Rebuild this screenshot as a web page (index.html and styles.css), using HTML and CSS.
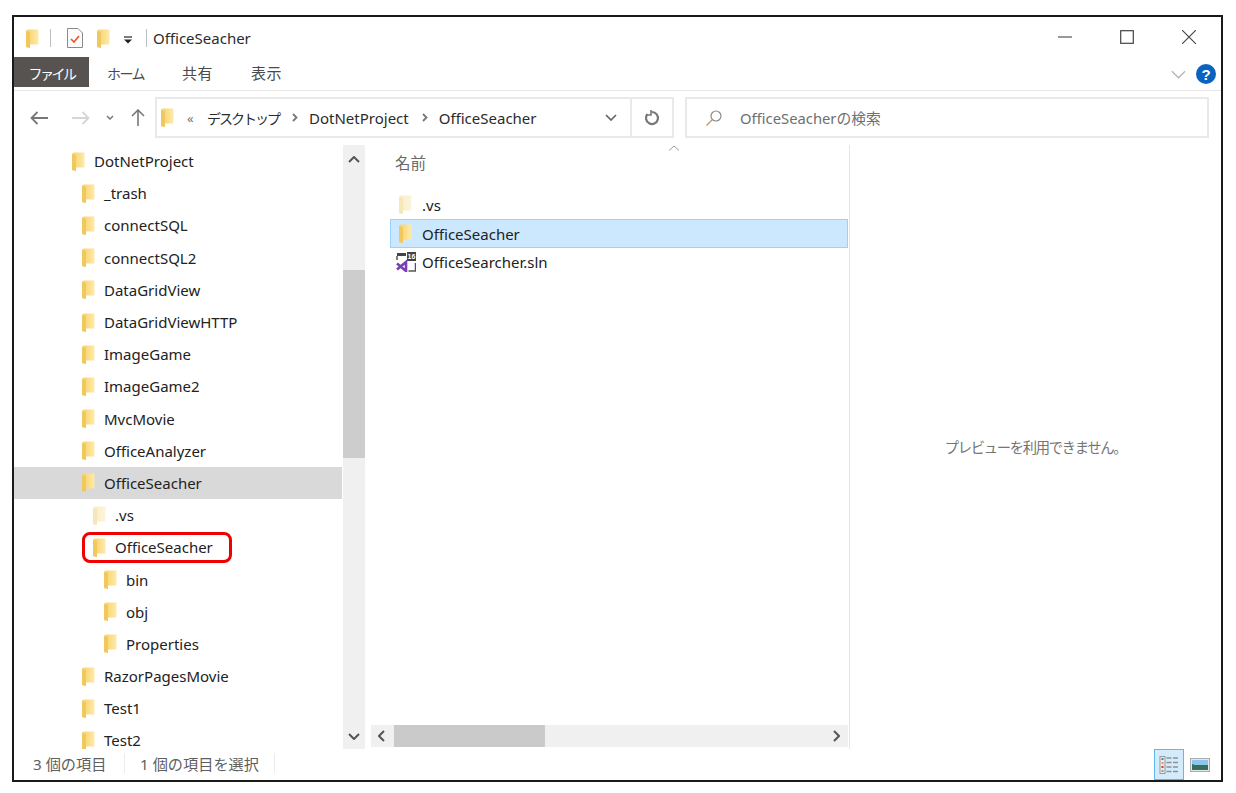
FILE: index.html
```html
<!DOCTYPE html>
<html lang="ja">
<head>
<meta charset="utf-8">
<title>OfficeSeacher</title>
<link rel="stylesheet" href="styles.css">
</head>
<body>
<svg class="defs" width="0" height="0" aria-hidden="true">
  <defs>
    <linearGradient id="fg" x1="0" x2="1" y1="0" y2="0"><stop offset="0" stop-color="#f6d06c"/><stop offset="0.45" stop-color="#fbdc82"/><stop offset="1" stop-color="#fdeaae"/></linearGradient>
    <linearGradient id="fl" x1="0" x2="1" y1="0" y2="0"><stop offset="0" stop-color="#f8ecc6"/><stop offset="1" stop-color="#fdf5da"/></linearGradient>
    <symbol id="folder" viewBox="0 0 13 19"><path d="M0 2 L1.5 .5 H12.5 V15.5 H4 V19 L0 18 Z" fill="url(#fg)"/><path d="M0 2 L4 3.2 V19 L0 18 Z" fill="#f0c85e"/></symbol>
    <symbol id="folder-light" viewBox="0 0 13 19"><path d="M0 2 L1.5 .5 H12.5 V15.5 H4 V19 L0 18 Z" fill="url(#fl)"/><path d="M0 2 L4 3.2 V19 L0 18 Z" fill="#f6e7ba"/></symbol>
  </defs>
</svg>
<div class="window">
  <header class="titlebar">
    <svg class="ficon"><use href="#folder"/></svg>
    <span class="tsep first"></span>
    <svg class="check" viewBox="0 0 16 20" width="16" height="20"><path d="M.5 .5H11L15.5 5V19.5H.5Z" fill="#fbfbfb" stroke="#8a8a8a"/><path d="M4 11l3 3 5-6" fill="none" stroke="#e8562a" stroke-width="1.6"/></svg>
    <svg class="ficon qa"><use href="#folder"/></svg>
    <svg class="qadrop" viewBox="0 0 9 8" width="9" height="8"><path d="M0 1h8" stroke="#222" stroke-width="1.2"/><path d="M0 3.5h8L4 7.5Z" fill="#222"/></svg>
    <span class="tsep second"></span>
    <span class="title">OfficeSeacher</span>
    <div class="winbtns">
      <svg viewBox="0 0 14 14" width="14" height="14" class="wb"><path d="M0 7h14" stroke="#555" stroke-width="1.2"/></svg>
      <svg viewBox="0 0 14 14" width="14" height="14" class="wb"><rect x=".7" y=".7" width="12.600" height="12.600" fill="none" stroke="#444" stroke-width="1.200"/></svg>
      <svg viewBox="0 0 14 14" width="14" height="14" class="wb"><path d="M0 0l14 14M14 0L0 14" stroke="#444" stroke-width="1.100"/></svg>
    </div>
  </header>
  <nav class="ribbon">
    <span class="tab active">ファイル</span>
    <span class="tab home">ホーム</span>
    <span class="tab share">共有</span>
    <span class="tab view">表示</span>
    <span class="ribbon-right">
      <svg viewBox="0 0 16 9" width="15" height="9"><path d="M1 1l7 7 7-7" fill="none" stroke="#b5b5b5" stroke-width="1.400"/></svg>
      <span class="help">?</span>
    </span>
  </nav>
  <div class="addressrow">
    <div class="navbtns">
      <svg viewBox="0 0 18 14" width="18" height="14"><path d="M1 7h17M7.500 1L1.500 7l6 6" fill="none" stroke="#777" stroke-width="1.800"/></svg>
      <svg class="fwd" viewBox="0 0 18 14" width="18" height="14"><path d="M0 7h17M10.500 1l6 6-6 6" fill="none" stroke="#d6d6d6" stroke-width="1.800"/></svg>
      <svg class="hist" viewBox="0 0 8 5" width="8" height="5"><path d="M1 1l3 3 3-3" fill="none" stroke="#777" stroke-width="1.500"/></svg>
      <svg class="up" viewBox="0 0 14 17" width="14" height="17"><path d="M7 17V1M1 7l6-6 6 6" fill="none" stroke="#777" stroke-width="1.600"/></svg>
    </div>
    <div class="addrbox">
      <svg class="ficon"><use href="#folder"/></svg>
      <span class="more">«</span>
      <span class="crumb jp">デスクトップ</span>
      <svg class="cchev" viewBox="0 0 6 9" width="6" height="9"><path d="M1 1l3.500 3.500L1 8" fill="none" stroke="#777" stroke-width="1.800"/></svg>
      <span class="crumb">DotNetProject</span>
      <svg class="cchev" viewBox="0 0 6 9" width="6" height="9"><path d="M1 1l3.500 3.500L1 8" fill="none" stroke="#777" stroke-width="1.800"/></svg>
      <span class="crumb">OfficeSeacher</span>
      <svg class="addrdrop" viewBox="0 0 12 7" width="12" height="7"><path d="M1 1l5 5 5-5" fill="none" stroke="#666" stroke-width="1.700"/></svg>
      <span class="refresh">
        <svg viewBox="0 0 16 16" width="16" height="16"><path d="M3.500 4A6 6 0 1 0 8 2" fill="none" stroke="#777" stroke-width="2.200"/><path d="M7 0v5H2.500" fill="none" stroke="#777" stroke-width="1.600"/></svg>
      </span>
    </div>
    <div class="searchbox">
      <svg viewBox="0 0 18 18" width="18" height="18"><circle cx="11" cy="7" r="5" fill="none" stroke="#8b8b8b" stroke-width="1.200"/><path d="M7.500 10.500L1.500 16.500" stroke="#c39a6b" stroke-width="1.500"/></svg>
      <span>OfficeSeacherの検索</span>
    </div>
  </div>
  <main class="content">
    <aside class="tree">
      <ul class="treelist">
        <li class="row l1"><svg class="ficon"><use href="#folder"/></svg>DotNetProject</li>
        <li class="row l2"><svg class="ficon"><use href="#folder"/></svg>_trash</li>
        <li class="row l2"><svg class="ficon"><use href="#folder"/></svg>connectSQL</li>
        <li class="row l2"><svg class="ficon"><use href="#folder"/></svg>connectSQL2</li>
        <li class="row l2"><svg class="ficon"><use href="#folder"/></svg>DataGridView</li>
        <li class="row l2"><svg class="ficon"><use href="#folder"/></svg>DataGridViewHTTP</li>
        <li class="row l2"><svg class="ficon"><use href="#folder"/></svg>ImageGame</li>
        <li class="row l2"><svg class="ficon"><use href="#folder"/></svg>ImageGame2</li>
        <li class="row l2"><svg class="ficon"><use href="#folder"/></svg>MvcMovie</li>
        <li class="row l2"><svg class="ficon"><use href="#folder"/></svg>OfficeAnalyzer</li>
        <li class="row l2 current"><svg class="ficon"><use href="#folder"/></svg>OfficeSeacher</li>
        <li class="row l3"><svg class="ficon"><use href="#folder-light"/></svg>.vs</li>
        <li class="row l3 marked"><svg class="ficon"><use href="#folder"/></svg>OfficeSeacher<span class="redmark"></span></li>
        <li class="row l4"><svg class="ficon"><use href="#folder"/></svg>bin</li>
        <li class="row l4"><svg class="ficon"><use href="#folder"/></svg>obj</li>
        <li class="row l4"><svg class="ficon"><use href="#folder"/></svg>Properties</li>
        <li class="row l2"><svg class="ficon"><use href="#folder"/></svg>RazorPagesMovie</li>
        <li class="row l2"><svg class="ficon"><use href="#folder"/></svg>Test1</li>
        <li class="row l2"><svg class="ficon"><use href="#folder"/></svg>Test2</li>
      </ul>
    </aside>
    <div class="vscroll">
      <svg viewBox="0 0 12 7" width="12" height="7"><path d="M1 6l5-5 5 5" fill="none" stroke="#555" stroke-width="2"/></svg>
      <span class="vthumb"></span>
      <svg viewBox="0 0 12 7" width="12" height="7"><path d="M1 1l5 5 5-5" fill="none" stroke="#555" stroke-width="2"/></svg>
    </div>
    <section class="list">
      <div class="listbody">
        <svg class="sortcaret" viewBox="0 0 12 6" width="12" height="6"><path d="M1 5.500L6 1l5 4.500" fill="none" stroke="#9a9a9a"/></svg>
        <div class="colhead">名前</div>
        <div class="file"><svg class="ficon"><use href="#folder-light"/></svg>.vs</div>
        <div class="file selected"><svg class="ficon"><use href="#folder"/></svg>OfficeSeacher</div>
        <div class="file sln">
          <svg class="slnicon" viewBox="0 0 20 20" width="20" height="20">
            <path d="M1 1h9v3H1z" fill="#444"/>
            <rect x="11" y="0" width="9" height="9" fill="#444"/>
            <path d="M1 4v4M19.500 11v8h-7" fill="none" stroke="#555" stroke-width="1.500"/>
            <text class="slnnum" x="15.500" y="7.300" text-anchor="middle">16</text>
            <path d="M1 11.500l9 7.500V10L1 17.500" fill="none" stroke="#7b3fb5" stroke-width="2.600"/>
          </svg>OfficeSearcher.sln
        </div>
      </div>
      <div class="hscroll">
        <svg viewBox="0 0 7 12" width="7" height="12"><path d="M6 1L1 6l5 5" fill="none" stroke="#555" stroke-width="2"/></svg>
        <span class="hthumb"></span>
        <svg class="hright" viewBox="0 0 7 12" width="7" height="12"><path d="M1 1l5 5-5 5" fill="none" stroke="#555" stroke-width="2"/></svg>
      </div>
    </section>
    <section class="preview">プレビューを利用できません。</section>
  </main>
  <footer class="status">
    <span class="count">3 個の項目</span>
    <span class="ssep a"></span>
    <span class="selcount">1 個の項目を選択</span>
    <span class="ssep"></span>
    <span class="viewbtns">
      <span class="vbtn on">
        <svg viewBox="0 0 20 20" width="20" height="20">
          <rect x="1" y="1.500" width="5" height="17" fill="#ececec" stroke="#999"/>
          <path d="M2.500 4h2" stroke="#4a7fc0" stroke-width="2"/><path d="M2.500 8h2" stroke="#d9a441" stroke-width="2"/><path d="M2.500 12h2" stroke="#e03030" stroke-width="2"/><path d="M2.500 16h2" stroke="#999" stroke-width="2"/>
          <path d="M7.500 3h5M14 3h5M7.500 7.500h5M14 7.500h5M7.500 12h5M14 12h5M7.500 16.500h5M14 16.500h5" stroke="#8c9298" stroke-width="1.300"/>
        </svg>
      </span>
      <svg class="imgicon" viewBox="0 0 20 14" width="20" height="14">
        <rect x=".5" y=".5" width="19" height="13" fill="#e8e8e8" stroke="#aaa"/>
        <rect x="2" y="2" width="16" height="5" fill="#8cc6ee"/>
        <rect x="2" y="7" width="16" height="5" fill="#2f6b52"/>
        <path d="M2 6l6 2 5-1 5 1v4H2Z" fill="#356f5a"/>
      </svg>
    </span>
  </footer>
</div>
</body>
</html>
```

FILE: styles.css
```css
* { box-sizing: border-box; }
html, body { margin: 0; padding: 0; background: #fff; }
body {
  width: 1236px;
  height: 793px;
  overflow: hidden;
  padding: 15px 0 0 12px;
  font-family: "Noto Sans", "Noto Sans CJK JP", sans-serif;
  font-size: 15px;
  color: #222;
}
.defs { position: absolute; }
.window {
  width: 1211px;
  height: 767px;
  border: 2px solid #1a1a1a;
  background: #fff;
  display: flex;
  flex-direction: column;
  overflow: hidden;
}
.ficon { width: 13px; height: 19px; flex: none; }

.titlebar { height: 40px; flex: none; display: flex; align-items: center; padding: 2px 0 0 12px; }
.tsep { width: 1px; height: 18px; background: #bdbdbd; flex: none; }
.tsep.first { margin-left: 11px; }
.check { margin-left: 16px; flex: none; }
.qa { margin-left: 14px; }
.qadrop { margin-left: 14px; margin-top: 3px; flex: none; }
.tsep.second { margin-left: 13px; }
.title { margin-left: 6px; font-size: 15px; color: #2b2b2b; }
.winbtns { margin-left: auto; display: flex; align-items: center; gap: 48px; padding-right: 25px; margin-top: -2px; }

.ribbon { height: 34px; flex: none; display: flex; align-items: flex-start; border-bottom: 1.500px solid #e6e6e6; }
.tab { font-size: 15px; height: 30px; line-height: 33px; color: #4a4a4a; white-space: nowrap; }
.tab.active { width: 75px; background: #575350; color: #fff; text-align: center; font-size: 14px; letter-spacing: -2.500px; }
.tab.home { margin-left: 18px; font-size: 14px; letter-spacing: -1.500px; }
.tab.share { margin-left: 38px; letter-spacing: .5px; }
.tab.view { margin-left: 38px; letter-spacing: .5px; }
.ribbon-right { margin-left: auto; display: flex; align-items: center; gap: 10px; height: 34px; padding-right: 5px; }
.help {
  width: 20px; height: 20px; border-radius: 50%;
  background: #0b63c0; color: #fff; font-weight: 700; font-size: 15px;
  display: flex; align-items: center; justify-content: center;
  font-family: "Liberation Sans", sans-serif;
}

.addressrow { height: 54px; flex: none; display: flex; padding-top: 6px; }
.navbtns { width: 141px; height: 41px; flex: none; display: flex; align-items: center; padding-left: 16px; }
.fwd { margin-left: 24px; }
.hist { margin-left: 16px; }
.up { margin-left: 17px; }
.addrbox {
  width: 519px; height: 41px; flex: none;
  border: 2px solid #e9e9e9;
  display: flex; align-items: center; padding-left: 4px;
}
.more { margin-left: 13px; color: #777; font-size: 13px; width: 20px; }
.crumb { color: #2b2b2b; font-size: 15px; }
.crumb.jp { font-size: 14px; letter-spacing: -2px; white-space: nowrap; }
.cchev { margin: 0 11px 0 13px; flex: none; }
.addrdrop { margin-left: auto; margin-right: 13px; flex: none; }
.refresh {
  width: 42px; height: 37px; border-left: 2px solid #e9e9e9; flex: none;
  display: flex; align-items: center; justify-content: center;
}
.searchbox {
  margin-left: 11px; width: 524px; height: 41px; flex: none;
  border: 2px solid #e9e9e9;
  display: flex; align-items: center; gap: 17px; padding-left: 18px;
  color: #6f6f6f; font-size: 14.800px;
}

.content { flex: 1; min-height: 0; display: flex; }
.tree { width: 328px; flex: none; overflow: hidden; }
.treelist { list-style: none; margin: 0; padding: 0; }
.row { height: 32.200px; display: flex; align-items: center; white-space: nowrap; position: relative; color: #222; }
.row .ficon { margin-right: 9px; }
.l1 { padding-left: 58px; }
.l2 { padding-left: 68px; }
.l3 { padding-left: 79px; }
.l4 { padding-left: 90px; }
.current { background: #d9d9d9; }
.redmark {
  position: absolute; left: 68px; top: 1px; width: 150px; height: 31px;
  border: 3px solid #f00000; border-radius: 8px;
}
.vscroll {
  width: 22px; margin-left: 1px; flex: none; background: #f0f0f0;
  display: flex; flex-direction: column; align-items: center; position: relative;
  padding: 11px 0 9px;
}
.vscroll svg { flex: none; }
.vthumb { width: 100%; height: 188px; background: #cdcdcd; margin-top: 107px; margin-bottom: auto; }
.list {
  width: 479px; margin-left: 6px; flex: none;
  border-right: 1px solid #e5e5e5;
  display: flex; flex-direction: column;
  padding-bottom: 2px;
}
.listbody { flex: 1; min-height: 0; position: relative; padding-left: 19px; }
.sortcaret { position: absolute; left: 297px; top: 0; }
.colhead { height: 45px; padding: 6px 0 0 5px; color: #6a6a6a; font-size: 15.500px; line-height: 24px; }
.file { height: 29px; display: flex; align-items: center; white-space: nowrap; padding-left: 8px; border: 1px solid transparent; color: #222; margin-right: 1px; }
.file .ficon { margin-right: 10px; }
.selected { background: #cce8ff; border-color: #99d1ff; }
.sln { margin-top: -1px; }
.slnicon { margin: 0 6px 0 -3px; flex: none; }
.slnnum { font-size: 7px; font-weight: 700; fill: #fff; font-family: "Liberation Sans", sans-serif; }
.hscroll { height: 22px; flex: none; background: #f0f0f0; display: flex; align-items: center; padding-left: 7px; margin-right: 1px; }
.hscroll svg { flex: none; }
.hthumb { width: 151px; height: 100%; background: #cacaca; margin-left: 9px; }
.hright { margin-left: auto; margin-right: 8px; }
.preview {
  flex: 1; display: flex; align-items: center; justify-content: center;
  color: #757575; font-size: 14.300px; letter-spacing: -1.300px; padding-bottom: 1px;
}

.status { height: 31px; flex: none; display: flex; align-items: center; font-size: 15.200px; color: #5f5f5f; padding-left: 19px; }
.count { width: 91px; white-space: nowrap; margin-bottom: 3px; }
.ssep { width: 1px; height: 20px; background: #ececec; flex: none; margin-bottom: 3px; }
.selcount { margin-left: 15px; width: 134px; white-space: nowrap; margin-bottom: 3px; }
.viewbtns { margin-left: auto; display: flex; align-items: center; padding-right: 11px; }
.vbtn { width: 30px; height: 31px; display: flex; align-items: center; justify-content: center; }
.vbtn.on { background: #d3ebfb; border: 1px solid #62b8ea; }
.imgicon { margin-left: 6px; }
```
